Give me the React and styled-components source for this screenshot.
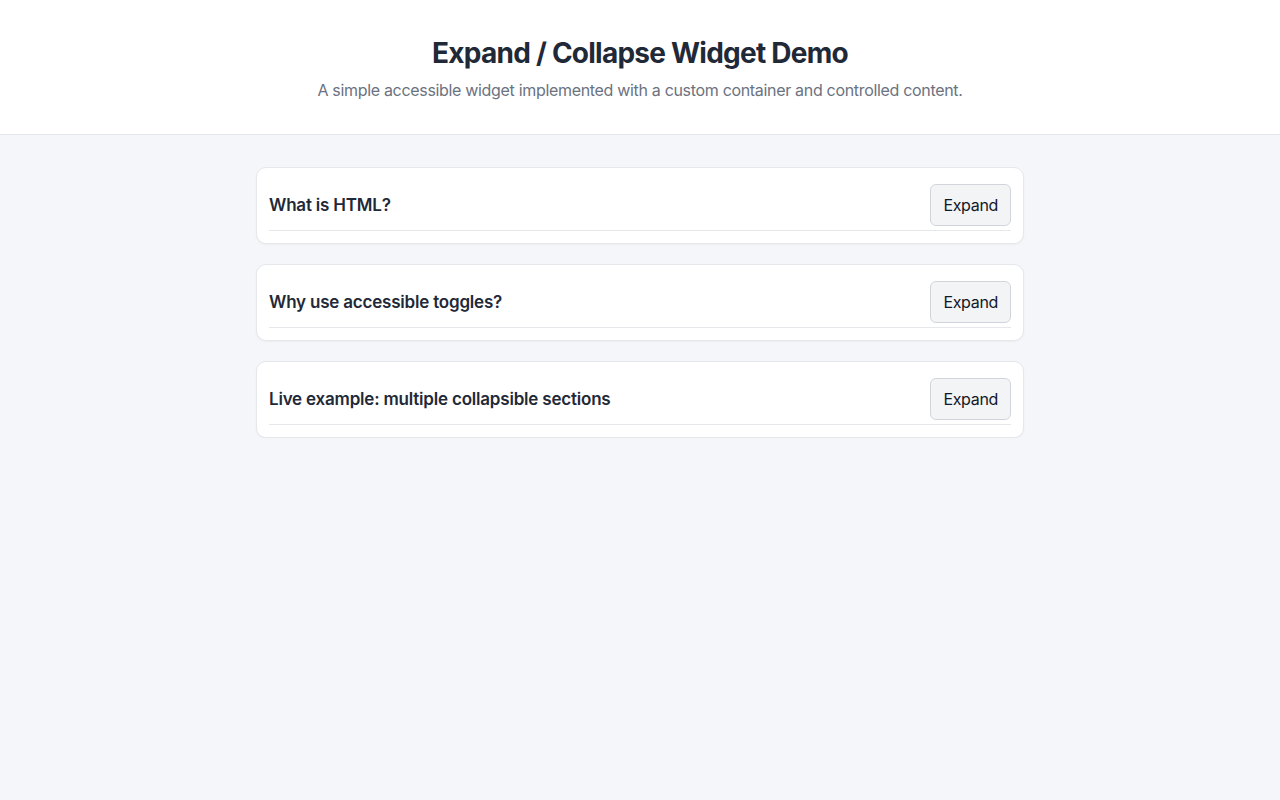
import React, { useState } from 'react';
import styled, { createGlobalStyle } from 'styled-components';

const GlobalStyle = createGlobalStyle`
  html, body {
    margin: 0;
    padding: 0;
    background: #f5f6fa;
    font-family: Inter, "Noto Sans", "Liberation Sans", sans-serif;
    letter-spacing: -0.02em;
    color: #1f2937;
  }
  * { box-sizing: border-box; }
`;

const Header = styled.header`
  background: #fff;
  border-bottom: 1px solid #e5e7eb;
  padding: 36px 24px 32px;
  text-align: center;
`;

const Title = styled.h1`
  margin: 0;
  font-size: 28px;
  line-height: 34px;
  font-weight: 700;
  letter-spacing: -0.027em;
  color: #1f2937;
`;

const Subtitle = styled.p`
  margin: 8px 0 0;
  font-size: 16px;
  line-height: 24px;
  color: #6b7280;
`;

const Main = styled.main`
  max-width: 768px;
  margin: 32px auto 0;
  display: flex;
  flex-direction: column;
  gap: 20px;
`;

const Card = styled.section`
  background: #fff;
  border: 1px solid #e5e7eb;
  border-radius: 10px;
  padding: 12px;
  box-shadow: 0 1px 2px rgba(0, 0, 0, 0.04);
`;

const CardHead = styled.div`
  display: flex;
  align-items: center;
  justify-content: space-between;
  padding: 4px 0;
  border-bottom: 1px solid #e5e7eb;
`;

const CardTitle = styled.h2`
  margin: 0;
  font-size: 17px;
  font-weight: 600;
  letter-spacing: -0.2px;
  color: #1f2937;
`;

const ToggleButton = styled.button`
  font-family: inherit;
  font-size: 16px;
  line-height: 24px;
  letter-spacing: -0.02em;
  color: #111827;
  background: #f3f4f6;
  border: 1px solid #d1d5db;
  border-radius: 6px;
  padding: 8px 12px;
  cursor: pointer;
`;

const Body = styled.div`
  padding: 12px 0 0;
  font-size: 15px;
  line-height: 22px;
  color: #374151;
`;

const sections = [
  { id: 'html', title: 'What is HTML?', text: 'HTML is the standard markup language for documents designed to be displayed in a web browser.' },
  { id: 'a11y', title: 'Why use accessible toggles?', text: 'Accessible toggles expose their state to assistive technology so everyone can use them.' },
  { id: 'live', title: 'Live example: multiple collapsible sections', text: 'Each section keeps its own open state, independent of the others.' },
];

const Section = ({ title, text }) => {
  const [open, setOpen] = useState(false);
  return (
    <Card>
      <CardHead>
        <CardTitle>{title}</CardTitle>
        <ToggleButton aria-expanded={open} onClick={() => setOpen(!open)}>
          {open ? 'Collapse' : 'Expand'}
        </ToggleButton>
      </CardHead>
      {open && <Body>{text}</Body>}
    </Card>
  );
};

export default function App() {
  return (
    <>
      <GlobalStyle />
      <Header>
        <Title>Expand / Collapse Widget Demo</Title>
        <Subtitle>A simple accessible widget implemented with a custom container and controlled content.</Subtitle>
      </Header>
      <Main>
        {sections.map((s) => (
          <Section key={s.id} title={s.title} text={s.text} />
        ))}
      </Main>
    </>
  );
}
